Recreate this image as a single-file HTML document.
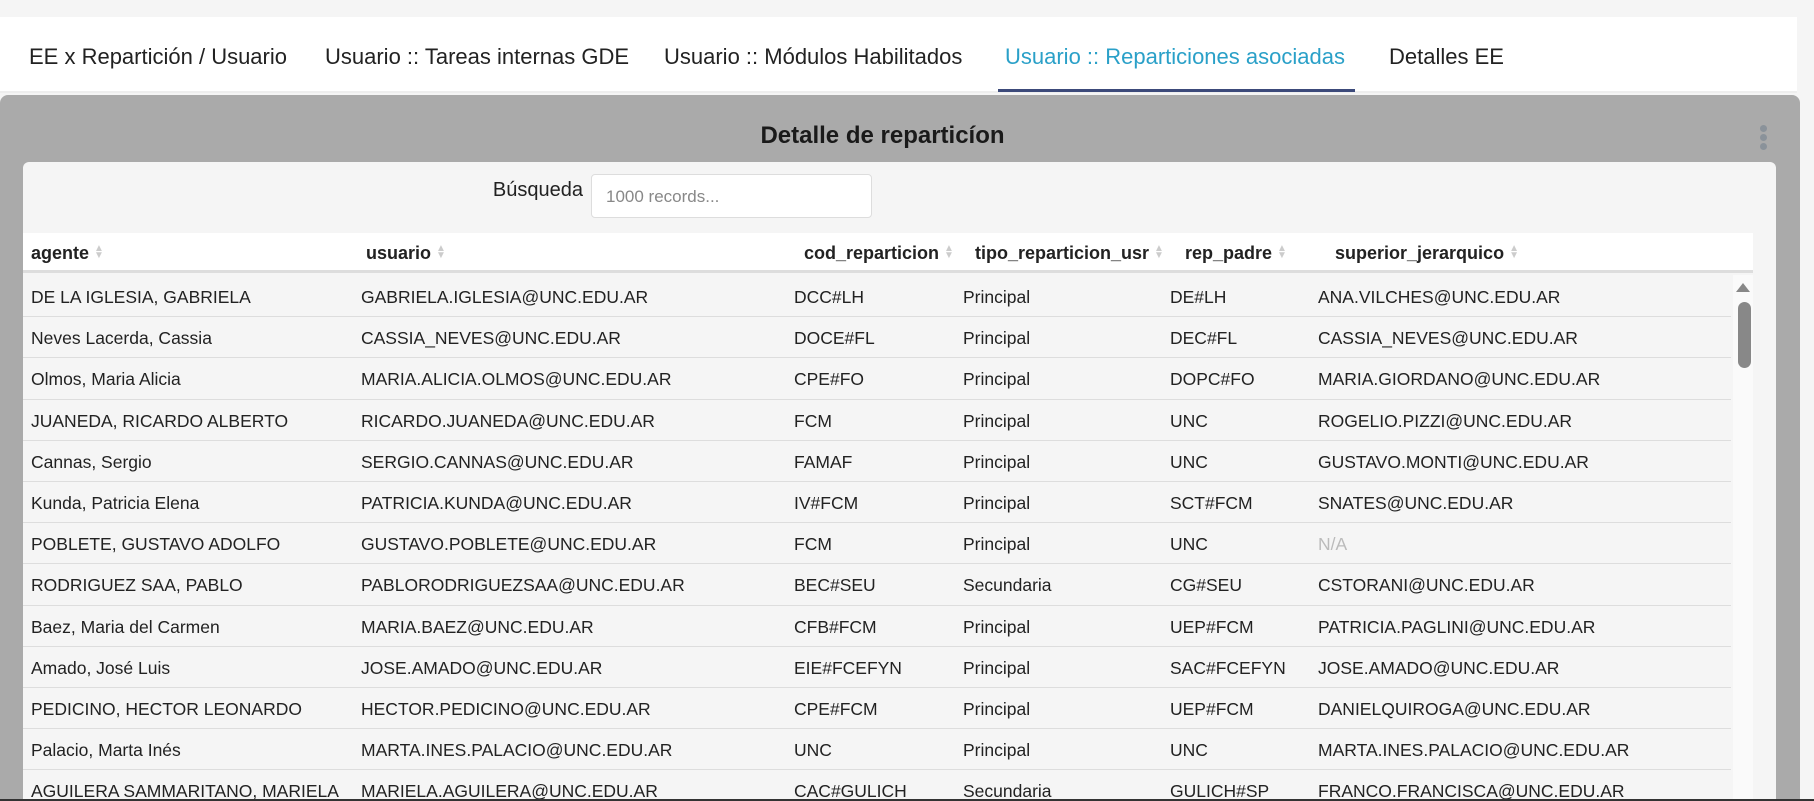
<!DOCTYPE html>
<html><head><meta charset="utf-8"><style>
*{margin:0;padding:0;box-sizing:border-box}
body{width:1814px;height:801px;overflow:hidden;background:#f5f5f5;font-family:"Liberation Sans",sans-serif;color:#222;position:relative}
.nav{position:absolute;left:0;top:17px;width:1797px;height:76px;background:#fff;border-bottom:2px solid #eee}
.tab{position:absolute;top:27px;font-size:22px;color:#222;white-space:nowrap}
.ul{position:absolute;left:998px;top:72px;width:357px;height:3px;background:#3c4a7a}
.panel{position:absolute;left:0;top:95px;width:1800px;height:706px;background:#aaa;border-radius:8px 8px 0 0}
.title{position:absolute;left:0;width:1765px;top:27px;text-align:center;font-weight:bold;font-size:24px;color:#1a1a1a}
.dot{position:absolute;left:1760px;width:7px;height:7px;border-radius:50%;background:#8a929a}
.card{position:absolute;left:23px;top:162px;width:1753px;height:639px;background:#f5f5f5;border-radius:6px 6px 0 0;overflow:hidden}
.lbl{position:absolute;right:1193px;top:17px;font-size:20px}
.inp{position:absolute;left:568px;top:12px;width:281px;height:44px;background:#fff;border:1px solid #ddd;border-radius:4px;font-size:17px;color:#888;padding:12px 14px}
.hdr{position:absolute;left:0;top:71px;width:1730px;height:40px;background:#fff;border-bottom:3px solid #ddd}
.h{position:absolute;top:10px;font-weight:bold;font-size:18px;white-space:nowrap}
.h i{display:inline-block;margin-left:5px;color:#ccc;font-style:normal;font-size:10px;line-height:7px;vertical-align:1px}
.rows{position:absolute;left:0;top:114px;width:1708px}
.r{position:relative;height:41.2px;border-bottom:1px solid #ddd;font-size:17.5px}
.r span{position:absolute;top:11px;white-space:nowrap}
.sb{position:absolute;left:1710px;top:113px;width:20px;height:530px;background:#fafafa}
</style></head><body>
<div class="nav">
<div class="tab" style="left:29px">EE x Repartición / Usuario</div>
<div class="tab" style="left:325px">Usuario :: Tareas internas GDE</div>
<div class="tab" style="left:664px">Usuario :: Módulos Habilitados</div>
<div class="tab" style="left:1005px;color:#2aa0c8">Usuario :: Reparticiones asociadas</div>
<div class="tab" style="left:1389px">Detalles EE</div>
<div class="ul"></div>
</div>
<div class="panel">
<div class="title">Detalle de reparticíon</div>
<div class="dot" style="top:30px"></div><div class="dot" style="top:39px"></div><div class="dot" style="top:48px"></div>
<div class="card" style="top:67px">
<div class="lbl">Búsqueda</div>
<div class="inp">1000 records...</div>
<div class="hdr">
<div class="h" style="left:8px">agente<i>▲<br>▼</i></div>
<div class="h" style="left:343px">usuario<i>▲<br>▼</i></div>
<div class="h" style="left:781px">cod_reparticion<i>▲<br>▼</i></div>
<div class="h" style="left:952px">tipo_reparticion_usr<i>▲<br>▼</i></div>
<div class="h" style="left:1162px">rep_padre<i>▲<br>▼</i></div>
<div class="h" style="left:1312px">superior_jerarquico<i>▲<br>▼</i></div>
</div>
<div class="rows">
<div class="r"><span style="left:8px">DE LA IGLESIA, GABRIELA</span><span style="left:338px">GABRIELA.IGLESIA@UNC.EDU.AR</span><span style="left:771px">DCC#LH</span><span style="left:940px">Principal</span><span style="left:1147px">DE#LH</span><span style="left:1295px">ANA.VILCHES@UNC.EDU.AR</span></div>
<div class="r"><span style="left:8px">Neves Lacerda, Cassia</span><span style="left:338px">CASSIA_NEVES@UNC.EDU.AR</span><span style="left:771px">DOCE#FL</span><span style="left:940px">Principal</span><span style="left:1147px">DEC#FL</span><span style="left:1295px">CASSIA_NEVES@UNC.EDU.AR</span></div>
<div class="r"><span style="left:8px">Olmos, Maria Alicia</span><span style="left:338px">MARIA.ALICIA.OLMOS@UNC.EDU.AR</span><span style="left:771px">CPE#FO</span><span style="left:940px">Principal</span><span style="left:1147px">DOPC#FO</span><span style="left:1295px">MARIA.GIORDANO@UNC.EDU.AR</span></div>
<div class="r"><span style="left:8px">JUANEDA, RICARDO ALBERTO</span><span style="left:338px">RICARDO.JUANEDA@UNC.EDU.AR</span><span style="left:771px">FCM</span><span style="left:940px">Principal</span><span style="left:1147px">UNC</span><span style="left:1295px">ROGELIO.PIZZI@UNC.EDU.AR</span></div>
<div class="r"><span style="left:8px">Cannas, Sergio</span><span style="left:338px">SERGIO.CANNAS@UNC.EDU.AR</span><span style="left:771px">FAMAF</span><span style="left:940px">Principal</span><span style="left:1147px">UNC</span><span style="left:1295px">GUSTAVO.MONTI@UNC.EDU.AR</span></div>
<div class="r"><span style="left:8px">Kunda, Patricia Elena</span><span style="left:338px">PATRICIA.KUNDA@UNC.EDU.AR</span><span style="left:771px">IV#FCM</span><span style="left:940px">Principal</span><span style="left:1147px">SCT#FCM</span><span style="left:1295px">SNATES@UNC.EDU.AR</span></div>
<div class="r"><span style="left:8px">POBLETE, GUSTAVO ADOLFO</span><span style="left:338px">GUSTAVO.POBLETE@UNC.EDU.AR</span><span style="left:771px">FCM</span><span style="left:940px">Principal</span><span style="left:1147px">UNC</span><span style="left:1295px;color:#bbb">N/A</span></div>
<div class="r"><span style="left:8px">RODRIGUEZ SAA, PABLO</span><span style="left:338px">PABLORODRIGUEZSAA@UNC.EDU.AR</span><span style="left:771px">BEC#SEU</span><span style="left:940px">Secundaria</span><span style="left:1147px">CG#SEU</span><span style="left:1295px">CSTORANI@UNC.EDU.AR</span></div>
<div class="r"><span style="left:8px">Baez, Maria del Carmen</span><span style="left:338px">MARIA.BAEZ@UNC.EDU.AR</span><span style="left:771px">CFB#FCM</span><span style="left:940px">Principal</span><span style="left:1147px">UEP#FCM</span><span style="left:1295px">PATRICIA.PAGLINI@UNC.EDU.AR</span></div>
<div class="r"><span style="left:8px">Amado, José Luis</span><span style="left:338px">JOSE.AMADO@UNC.EDU.AR</span><span style="left:771px">EIE#FCEFYN</span><span style="left:940px">Principal</span><span style="left:1147px">SAC#FCEFYN</span><span style="left:1295px">JOSE.AMADO@UNC.EDU.AR</span></div>
<div class="r"><span style="left:8px">PEDICINO, HECTOR LEONARDO</span><span style="left:338px">HECTOR.PEDICINO@UNC.EDU.AR</span><span style="left:771px">CPE#FCM</span><span style="left:940px">Principal</span><span style="left:1147px">UEP#FCM</span><span style="left:1295px">DANIELQUIROGA@UNC.EDU.AR</span></div>
<div class="r"><span style="left:8px">Palacio, Marta Inés</span><span style="left:338px">MARTA.INES.PALACIO@UNC.EDU.AR</span><span style="left:771px">UNC</span><span style="left:940px">Principal</span><span style="left:1147px">UNC</span><span style="left:1295px">MARTA.INES.PALACIO@UNC.EDU.AR</span></div>
<div class="r"><span style="left:8px">AGUILERA SAMMARITANO, MARIELA</span><span style="left:338px">MARIELA.AGUILERA@UNC.EDU.AR</span><span style="left:771px">CAC#GULICH</span><span style="left:940px">Secundaria</span><span style="left:1147px">GULICH#SP</span><span style="left:1295px">FRANCO.FRANCISCA@UNC.EDU.AR</span></div>
</div>
<div class="sb">
<div style="position:absolute;left:3px;top:8px;width:0;height:0;border-left:7px solid transparent;border-right:7px solid transparent;border-bottom:9px solid #888"></div>
<div style="position:absolute;left:5px;top:27px;width:13px;height:66px;border-radius:7px;background:#888"></div>
</div>
</div>
</div>
<div style="position:absolute;left:0;top:799px;width:1814px;height:2px;background:#333"></div>
</body></html>
